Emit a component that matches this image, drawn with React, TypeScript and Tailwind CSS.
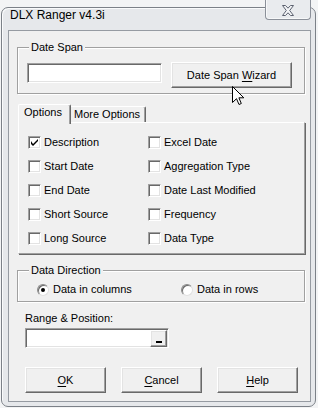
import React from "react";

const raised =
  "border border-t-white border-l-white border-r-[#696969] border-b-[#696969] shadow-[inset_-1px_-1px_0_#a0a0a0,inset_1px_1px_0_#e3e3e3] bg-[#f0f0f0]";
const sunken =
  "border border-t-[#a0a0a0] border-l-[#a0a0a0] border-r-white border-b-white shadow-[inset_1px_1px_0_#696969,inset_-1px_-1px_0_#e3e3e3] bg-white";

function Check({ label, checked }: { label: string; checked?: boolean }) {
  return (
    <div className="flex items-center h-[24px]">
      <div className={`w-[13px] h-[13px] shrink-0 flex items-center justify-center ${sunken}`}>
        {checked && (
          <svg width="7" height="7" viewBox="0 0 7 7">
            <path d="M0 2 L0 5 L2 7 L7 2 L7 0 L2 5 Z" fill="#000" />
          </svg>
        )}
      </div>
      <span className="ml-[3px]">{label}</span>
    </div>
  );
}

function Radio({ label, checked }: { label: string; checked?: boolean }) {
  return (
    <div className="flex items-center h-[13px]">
      <div className="w-[12px] h-[12px] rounded-full bg-white border border-t-[#8a8a8a] border-l-[#8a8a8a] border-r-[#e0e0e0] border-b-[#e0e0e0] shadow-[inset_1px_1px_0_#696969] flex items-center justify-center shrink-0">
        {checked && <div className="w-[4px] h-[4px] rounded-full bg-black" />}
      </div>
      <span className="ml-[4px]">{label}</span>
    </div>
  );
}

function Btn({ children }: { children: React.ReactNode }) {
  return (
    <div className={`w-[81px] h-[26px] flex items-center justify-center ${raised}`}>
      {children}
    </div>
  );
}

export default function App() {
  return (
    <div className="relative w-[318px] h-[408px] bg-[#f3f4f5] overflow-hidden pt-[7px] font-['Liberation_Sans',Arial,sans-serif] text-[11px] leading-[13px] text-black">
      {/* window */}
      <div className="ml-[1px] w-[315px] h-[400px] rounded-[7px] border border-[#7c8188] bg-[#e6e8eb] shadow-[inset_1px_1px_0_#fafbfc] flex flex-col pl-[6px] pr-[4px] pb-[4px]">
        {/* title bar */}
        <div className="h-[22px] flex items-start">
          <span className="pl-[2px] text-[12px] leading-[15px] text-black">DLX Ranger v4.3i</span>
          <div className="ml-auto -mt-[8px] w-[46px] h-[20px] rounded-b-[4px] border border-t-0 border-[#8b9099] bg-[#e9ebee] shadow-[inset_0_-1px_0_#f7f8f9,inset_1px_0_0_#f7f8f9] flex items-center justify-center">
            <svg width="14" height="11" viewBox="0 0 14 11" className="mt-[2px]">
              <path
                d="M1.5 0.5 H4.5 L7 3.2 L9.5 0.5 H12.5 L8.7 5.5 L12.5 10.5 H9.5 L7 7.8 L4.5 10.5 H1.5 L5.3 5.5 Z"
                fill="#f4f5f7"
                stroke="#5c6270"
                strokeWidth="1"
                strokeLinejoin="round"
              />
            </svg>
          </div>
        </div>

        {/* client */}
        <div className="flex-1 border border-[#969ba2] bg-[#f0f0f0] flex flex-col">
          {/* Date Span */}
          <fieldset className="ml-[8px] mt-[10px] w-[288px] border border-[#a0a0a0] shadow-[inset_1px_1px_0_#fff,1px_1px_0_#fff] pb-[5px] flex items-start">
            <legend className="ml-[11px] px-[2px] bg-[#f0f0f0] leading-[13px]">Date Span</legend>
            <div className={`ml-[9px] mt-[9px] w-[135px] h-[20px] ${sunken}`} />
            <div className={`mt-[8px] ml-[9px] w-[121px] h-[26px] flex items-center justify-center ${raised}`}>
              <span>
                Date Span <span className="underline underline-offset-[2px]">W</span>izard
              </span>
            </div>
          </fieldset>

          {/* tabs */}
          <div className="mt-[10px] ml-[9px] h-[18px] flex items-end">
            <div className="relative z-10 -mb-[2px] h-[20px] w-[53px] border border-b-0 border-t-white border-l-white border-r-[#696969] rounded-t-[2px] shadow-[inset_-1px_0_0_#a0a0a0] bg-[#f0f0f0] pl-[5px] pt-[1px]">
              Options
            </div>
            <div className="h-[16px] w-[75px] border-t border-r border-t-white border-r-[#696969] rounded-tr-[2px] shadow-[inset_-1px_0_0_#a0a0a0] pl-[3px] pt-[1px]">
              More Options
            </div>
          </div>
          <div className="ml-[9px] w-[287px] h-[132px] border border-t-white border-l-white border-r-[#a0a0a0] border-b-[#a0a0a0] shadow-[1px_1px_0_#696969] pl-[9px] pt-[7px] grid grid-cols-[120px_1fr] grid-flow-col grid-rows-[repeat(5,24px)] content-start">
            <Check label="Description" checked />
            <Check label="Start Date" />
            <Check label="End Date" />
            <Check label="Short Source" />
            <Check label="Long Source" />
            <Check label="Excel Date" />
            <Check label="Aggregation Type" />
            <Check label="Date Last Modified" />
            <Check label="Frequency" />
            <Check label="Data Type" />
          </div>

          {/* Data Direction */}
          <fieldset className="ml-[8px] mt-[10px] w-[288px] border border-[#a0a0a0] shadow-[inset_1px_1px_0_#fff,1px_1px_0_#fff] pb-[5px] flex">
            <legend className="ml-[11px] px-[2px] bg-[#f0f0f0] leading-[13px]">Data Direction</legend>
            <div className="ml-[19px] mt-[6px] flex">
              <div className="w-[144px]">
                <Radio label="Data in columns" checked />
              </div>
              <Radio label="Data in rows" />
            </div>
          </fieldset>

          {/* Range & Position */}
          <div className="ml-[16px] mt-[10px] h-[13px]">Range &amp; Position:</div>
          <div className={`ml-[16px] mt-[3px] w-[144px] h-[20px] flex justify-end items-center pr-[1px] ${sunken}`}>
            <div className={`w-[17px] h-[17px] flex items-end justify-center pb-[3px] ${raised}`}>
              <div className="w-[6px] h-[2px] bg-black" />
            </div>
          </div>

          {/* buttons */}
          <div className="ml-[16px] mt-[19px] flex gap-[15px]">
            <Btn>
              <span>
                <span className="underline underline-offset-[2px]">O</span>K
              </span>
            </Btn>
            <Btn>
              <span>
                <span className="underline underline-offset-[2px]">C</span>ancel
              </span>
            </Btn>
            <Btn>
              <span>
                <span className="underline underline-offset-[2px]">H</span>elp
              </span>
            </Btn>
          </div>
        </div>
      </div>

      {/* mouse cursor */}
      <svg
        className="absolute left-[232px] top-[86px]"
        width="13"
        height="20"
        viewBox="0 0 13 20"
      >
        <path
          d="M0.5 0.5 L0.5 16.5 L4.5 12.7 L7 18.5 L9.3 17.5 L6.9 11.8 L11.8 11.8 Z"
          fill="#fff"
          stroke="#000"
          strokeWidth="1"
          strokeLinejoin="miter"
        />
      </svg>
    </div>
  );
}
